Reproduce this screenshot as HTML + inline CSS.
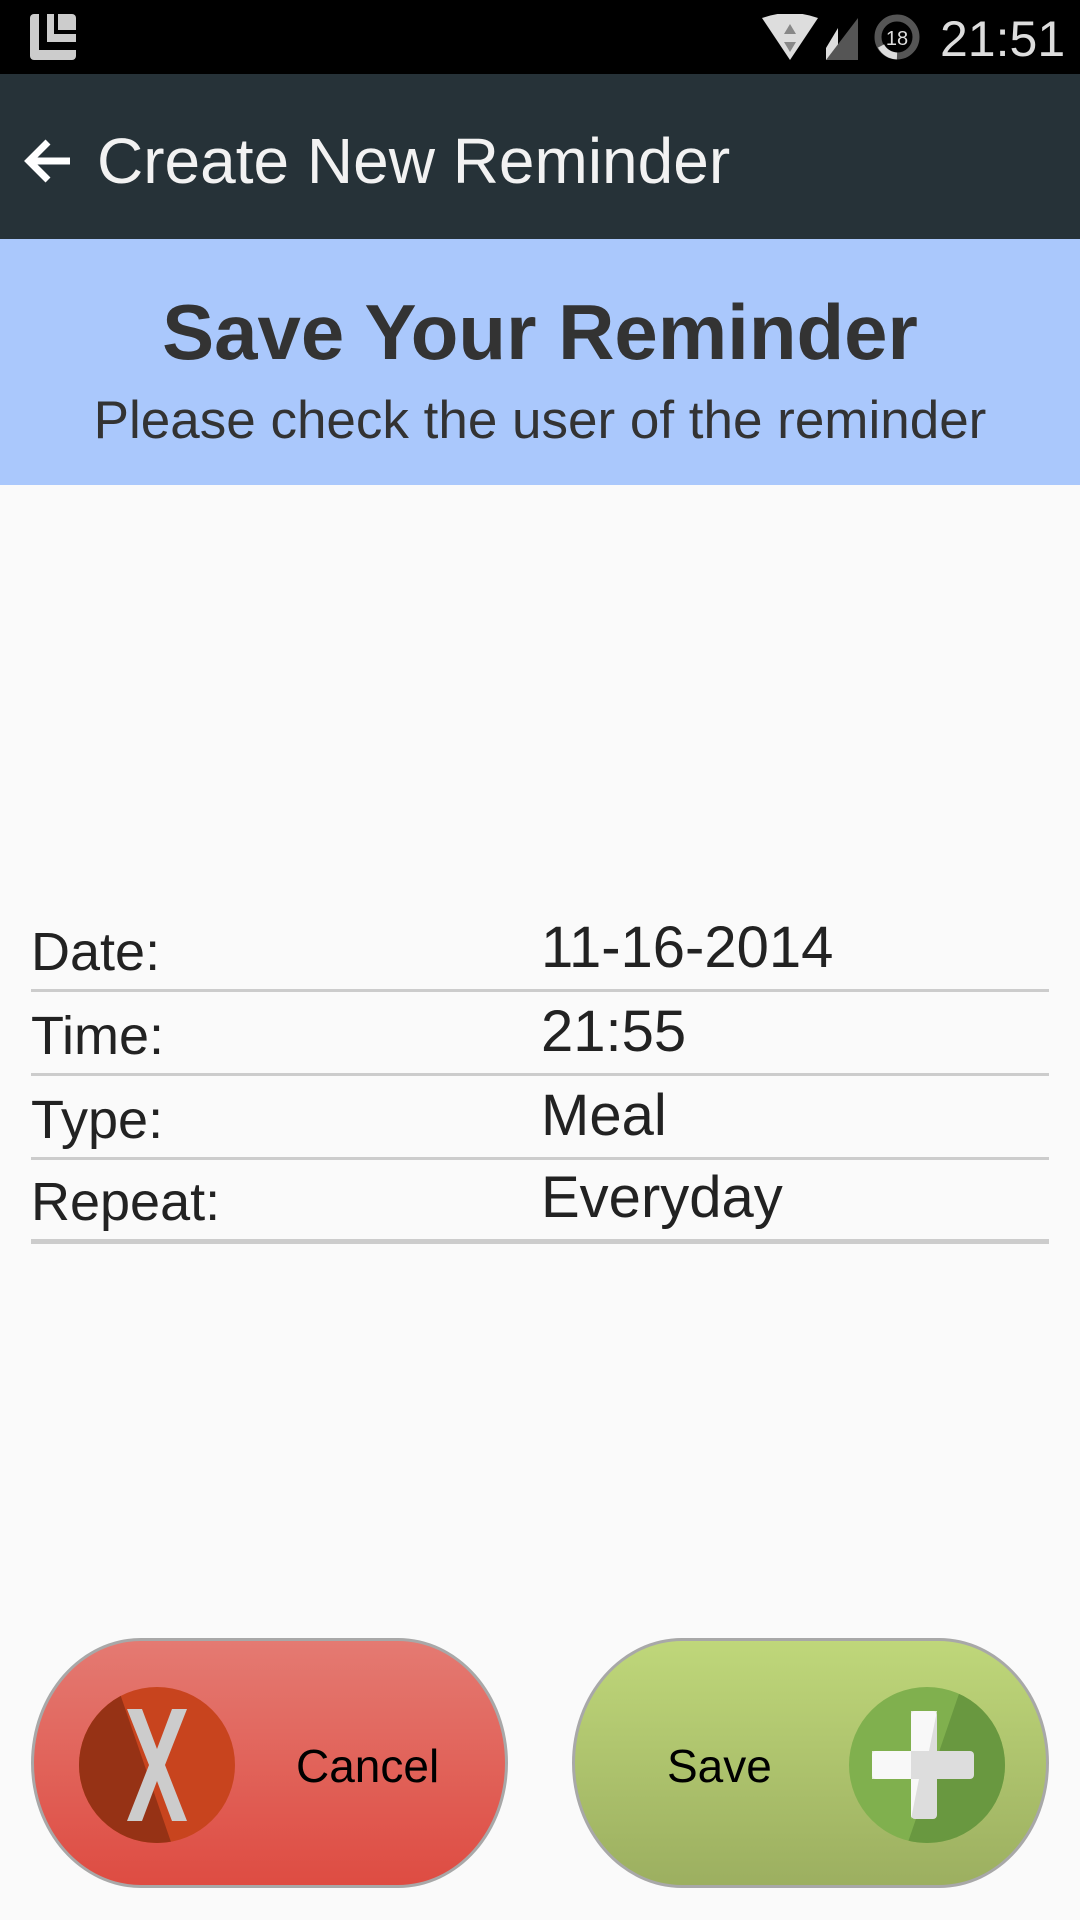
<!DOCTYPE html>
<html><head><meta charset="utf-8"><style>
*{margin:0;padding:0;box-sizing:border-box}
body{width:1080px;height:1920px;background:#fafafa;font-family:"Liberation Sans",sans-serif;position:relative;overflow:hidden}
.abs{position:absolute}
.sb{left:0;top:0;width:1080px;height:74px;background:#000}
.tb{left:0;top:74px;width:1080px;height:165px;background:#263238}
.hd{left:0;top:239px;width:1080px;height:246px;background:#aac8fc;text-align:center;color:#333}
.row{left:31px;width:1018px;height:84px;border-bottom:3px solid #ccc;font-size:54px;color:#222}
.row span{position:absolute;bottom:6px}
.row .v{left:510px;font-size:58px;bottom:8px}
.btn{top:1638px;width:477px;height:250px;border:3px solid #a8a8a8;border-radius:110px/125px;overflow:hidden}
</style></head><body>
<div class="abs sb">
 <svg class="abs" style="left:28px;top:12px" width="52" height="50"><rect x="2" y="2" width="46" height="46" rx="4" fill="#ccc"/><rect x="11" y="2" width="8" height="36" fill="#000"/><rect x="11" y="30" width="37" height="8" fill="#000"/><rect x="26" y="2" width="4" height="20" fill="#000"/><rect x="26" y="18" width="22" height="4" fill="#000"/></svg>
 <svg class="abs" style="left:760px;top:14px" width="100" height="48"><path d="M2 4 Q30 -6 58 4 L30 46 Z" fill="#ddd"/><path d="M30 10 l6 10 h-12z M30 38 l6 -10 h-12z" fill="#888"/><path d="M66 46 L66 34 L78 14 L78 46Z" fill="#ddd"/><path d="M66 46 L98 4 L98 46 Z" fill="#555"/></svg>
 <svg class="abs" style="left:872px;top:12px" width="50" height="50"><circle cx="25" cy="25" r="19" fill="none" stroke="#555" stroke-width="7"/><path d="M25 44 A19 19 0 0 1 9 34" fill="none" stroke="#ddd" stroke-width="7"/><text x="25" y="33" font-size="20" fill="#ddd" text-anchor="middle" font-family="Liberation Sans">18</text></svg>
 <div class="abs" style="left:940px;top:10px;font-size:50px;color:#ddd">21:51</div>
</div>
<div class="abs tb">
 <svg class="abs" style="left:24px;top:64px" width="50" height="46"><path d="M4 23 H46 M24 4 L5 23 L24 42" fill="none" stroke="#fff" stroke-width="7"/></svg>
 <div class="abs" style="left:97px;top:50px;font-size:64px;color:#f2f2f2">Create New Reminder</div>
</div>
<div class="abs hd">
 <div style="font-size:78px;font-weight:bold;margin-top:48px;line-height:90px">Save Your Reminder</div>
 <div style="font-size:53px;margin-top:14px;line-height:60px">Please check the user of the reminder</div>
</div>
<div class="abs row" style="top:908px"><span>Date:</span><span class="v">11-16-2014</span></div>
<div class="abs row" style="top:992px"><span>Time:</span><span class="v">21:55</span></div>
<div class="abs row" style="top:1076px"><span>Type:</span><span class="v">Meal</span></div>
<div class="abs row" style="top:1160px;border-bottom-width:5px"><span>Repeat:</span><span class="v">Everyday</span></div>
<div class="abs btn" style="left:31px;background:linear-gradient(#e47a72,#de4c42)">
 <svg class="abs" style="left:43px;top:44px" width="160" height="160"><defs><clipPath id="c1"><ellipse cx="80" cy="80" rx="78" ry="78"/></clipPath></defs><g clip-path="url(#c1)"><rect width="160" height="160" fill="#c8441e"/><path d="M0 0 L40 0 L95 160 L0 160Z" fill="#963215"/></g><path d="M50 40 h15 l15 40 l15 -40 h15 l-22 56 l22 56 h-15 l-15 -40 l-15 40 h-15 l22 -56z" fill="#ccc" transform="translate(0,-16)"/></svg>
 <div class="abs" style="left:262px;top:98px;font-size:46px;color:#000">Cancel</div>
</div>
<div class="abs btn" style="left:572px;background:linear-gradient(#bfd77a,#9caf60)">
 <div class="abs" style="left:92px;top:98px;font-size:46px;color:#000">Save</div>
 <svg class="abs" style="left:272px;top:44px" width="160" height="160"><defs><clipPath id="c2"><ellipse cx="80" cy="80" rx="78" ry="78"/></clipPath></defs><g clip-path="url(#c2)"><rect width="160" height="160" fill="#80b04e"/><path d="M115 0 L160 0 L160 160 L60 160Z" fill="#699840"/></g><rect x="64" y="26" width="26" height="108" rx="4" fill="#ddd"/><rect x="25" y="66" width="102" height="28" rx="4" fill="#ddd"/><path d="M64 26 h26 l-8 40 h-57 v28 h47 l-8 40 h0 z" fill="#fff" opacity=".8"/></svg>
</div>
</body></html>
